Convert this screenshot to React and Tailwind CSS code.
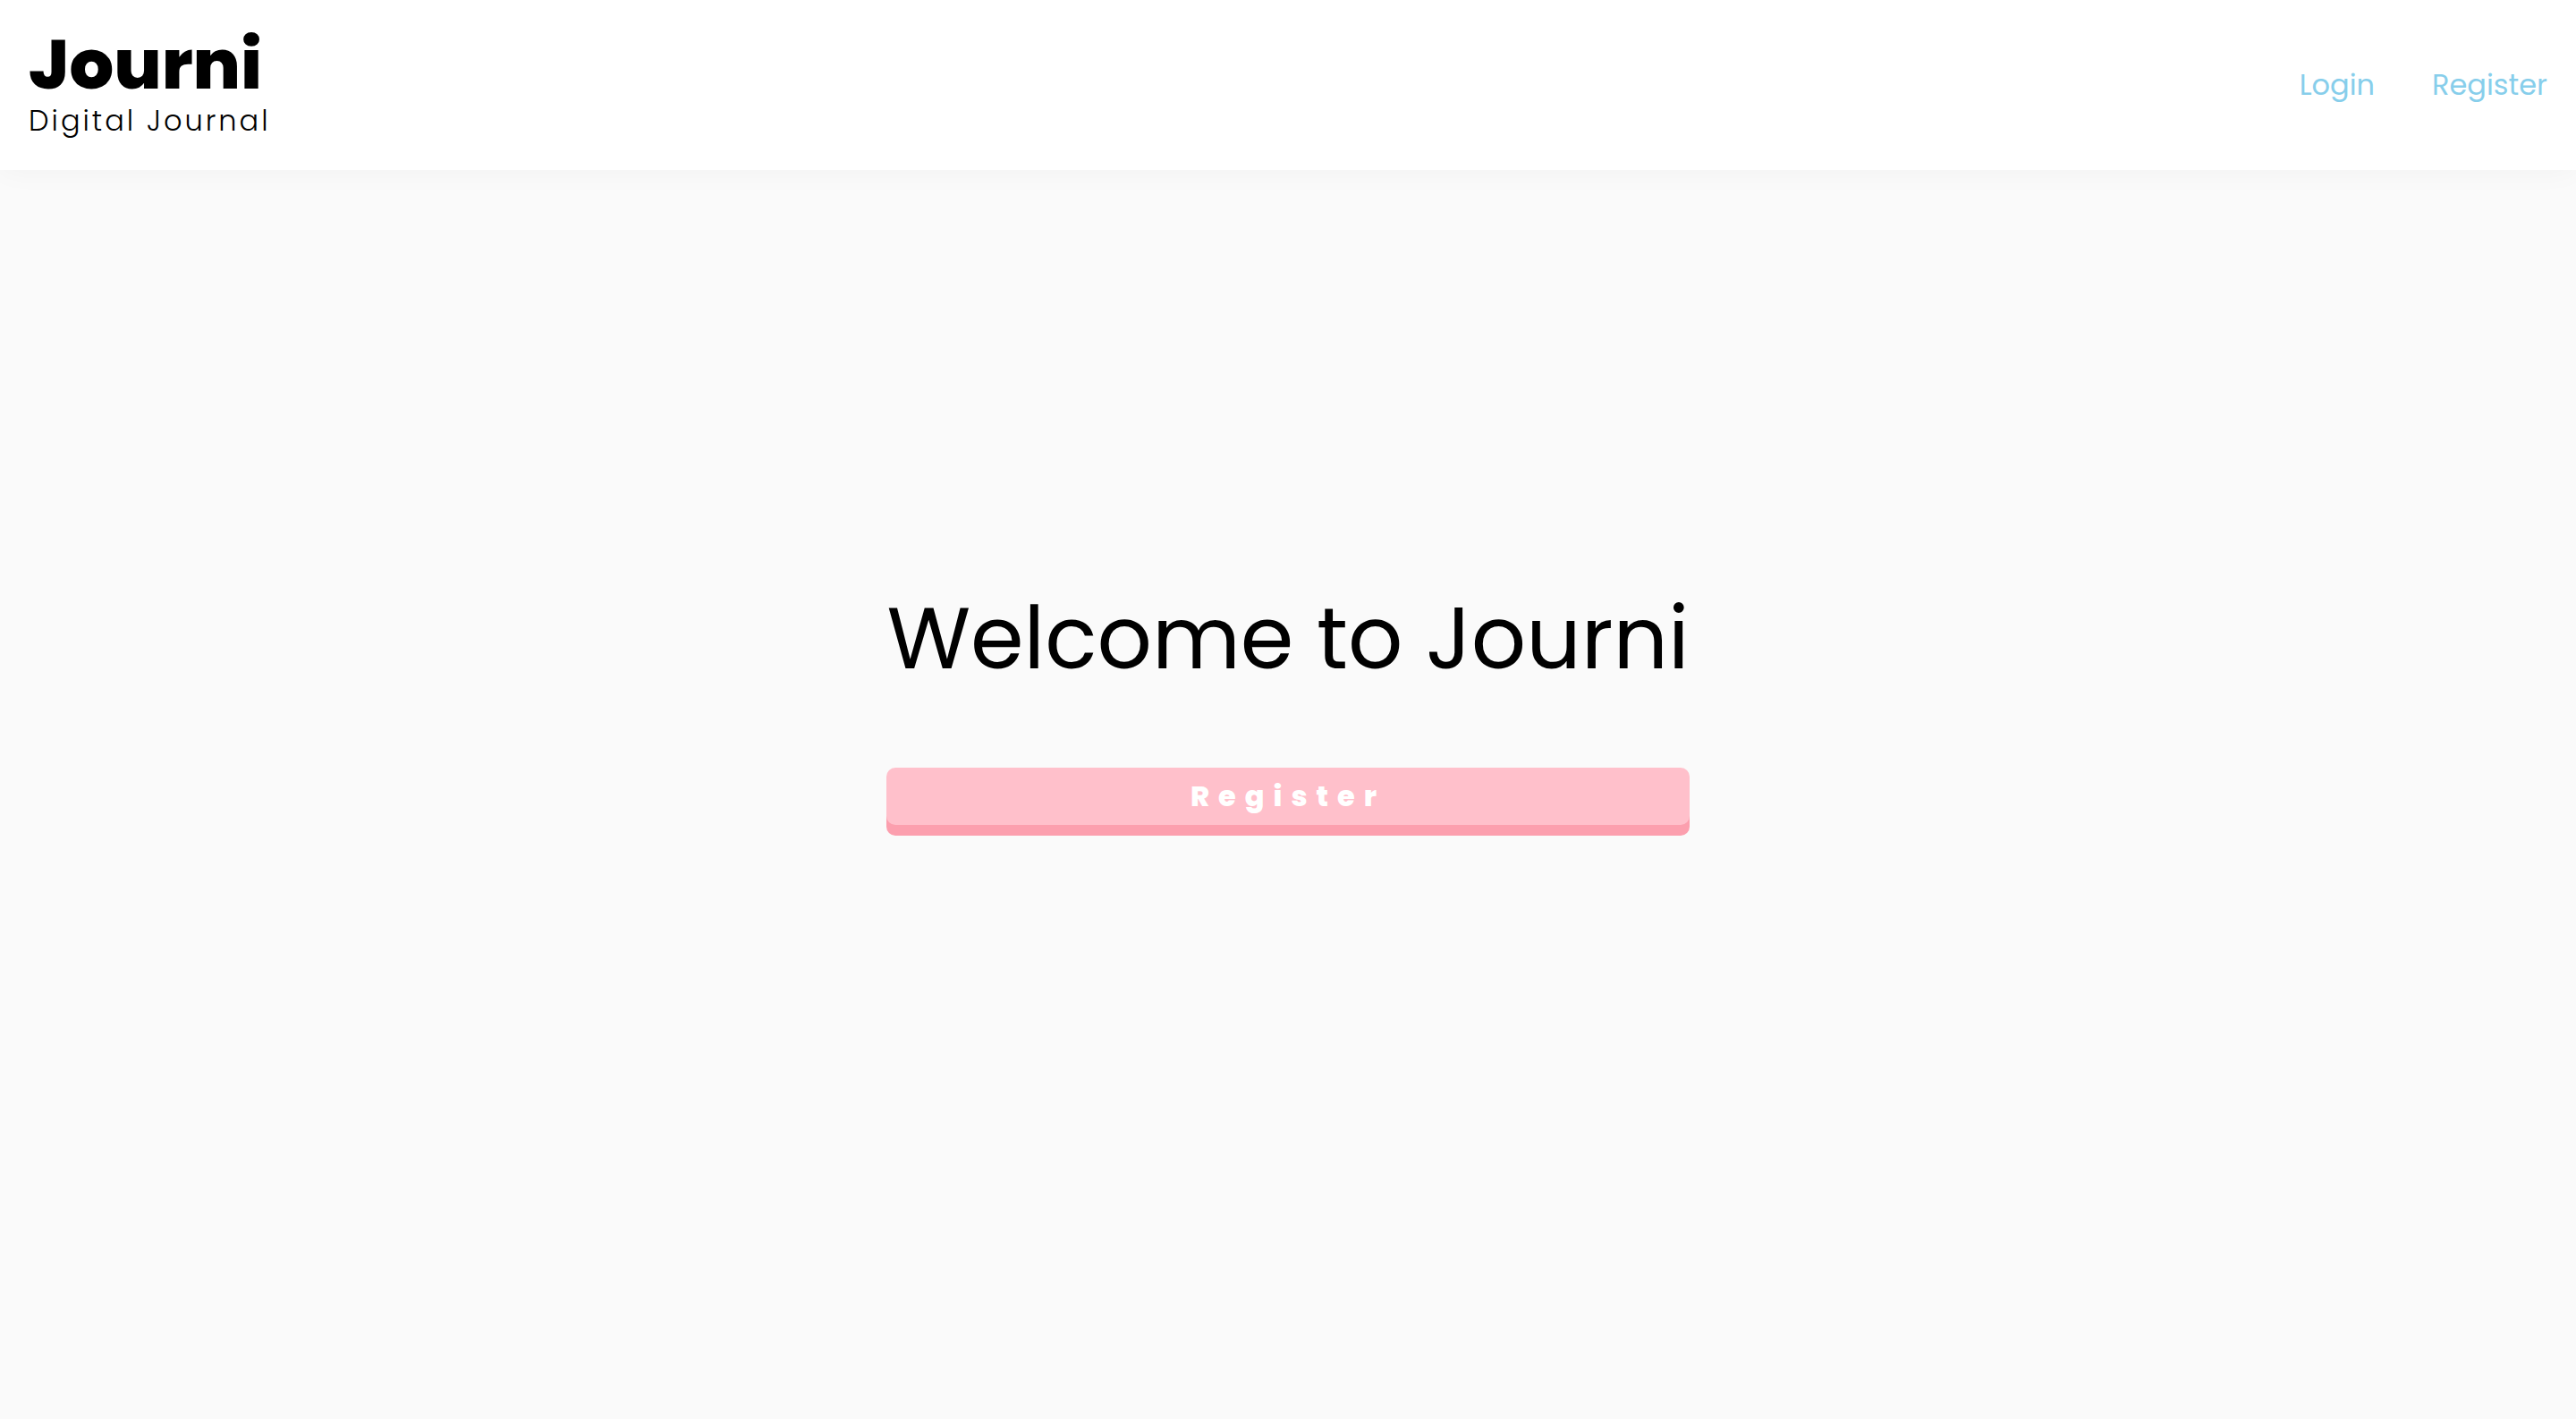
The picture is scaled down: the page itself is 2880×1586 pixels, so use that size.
export default function App() {
  return (
    <div className="flex min-h-screen flex-col bg-[#fafafa] font-['Poppins','Inter',sans-serif] text-black">
      <header className="flex items-center justify-between bg-white p-8 shadow-[0_0_32px_rgba(0,0,0,0.04)]">
        <a href="#home" className="flex flex-col">
          <span className="text-[78px] leading-[80px] font-extrabold">Journi</span>
          <span className="text-[32px] leading-[46px] font-light tracking-[3px]">Digital Journal</span>
        </a>
        <nav className="flex gap-16 text-[32px] text-[#87ceeb]">
          <a href="#login">Login</a>
          <a href="#register">Register</a>
        </nav>
      </header>
      <main className="flex grow flex-col items-center justify-center pb-[188px]">
        <div className="flex flex-col gap-24">
          <h1 className="text-[96px] leading-none">Welcome to Journi</h1>
          <button className="rounded-[10px] bg-[#ffc0cb] py-2 text-[32px] leading-[48px] font-extrabold tracking-[10px] text-white shadow-[0_12px_0_#fc9fae]">Register</button>
        </div>
      </main>
    </div>
  );
}
